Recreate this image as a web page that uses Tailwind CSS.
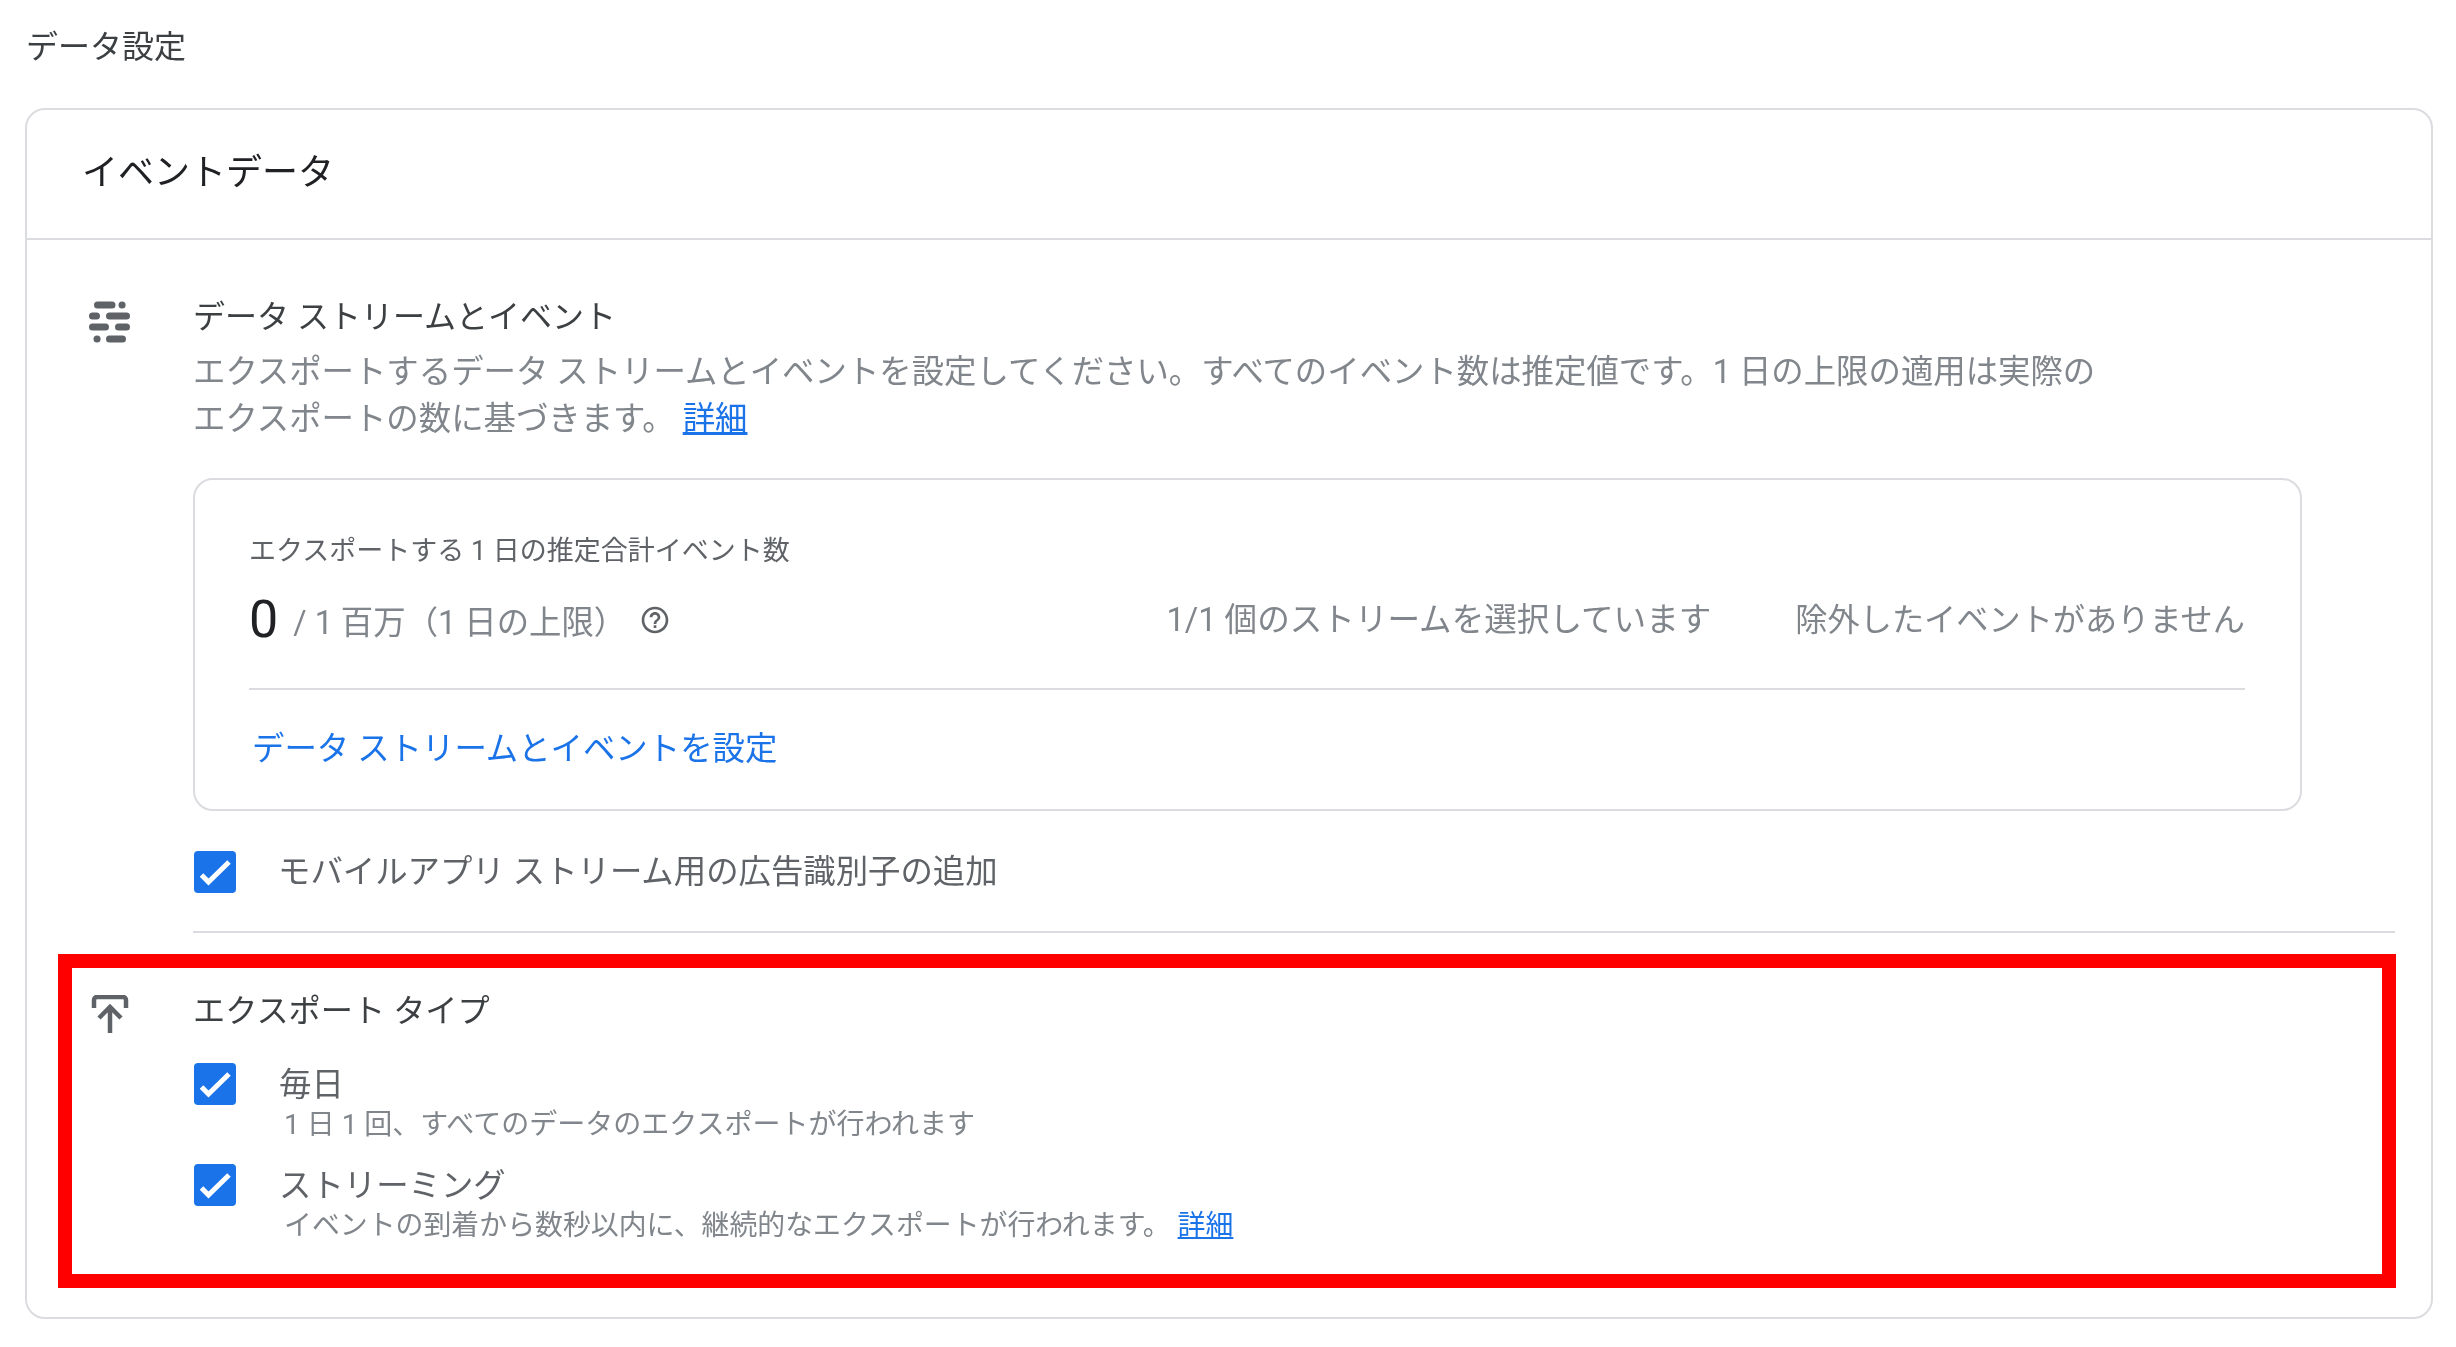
<!DOCTYPE html>
<html lang="ja">
<head>
    <meta charset="UTF-8">
    <title>データ設定</title>
    <script src="https://cdn.jsdelivr.net/npm/@tailwindcss/browser@4"></script>
</head>
<body class="bg-white font-['Roboto','Noto_Sans_CJK_JP',sans-serif] text-[#3c4043]">
    <div class="w-[2456px] h-[1347px] overflow-hidden blur-[0.6px]">
        <h1 class="ml-[26px] pt-[24px] h-[70px] text-[32px] leading-[46px] font-normal">データ設定</h1>

        <div class="mt-[38px] ml-[25px] w-[2408px] h-[1211px] border-2 border-[#dadce0] rounded-[20px]">
            <!-- header -->
            <div class="h-[130px] border-b-2 border-[#dadce0] pl-[55px] pb-[2px] flex items-center">
                <h2 class="text-[36px] font-normal text-[#202124]">イベントデータ</h2>
            </div>

            <!-- data streams -->
            <div class="flex items-start pl-[58px] pt-[54px]">
                <svg class="mt-[6px] w-[50px] h-[50px] shrink-0" viewBox="0 0 50 50" fill="none" stroke="#5f6368" stroke-width="7" stroke-linecap="round">
                    <path d="M12.5 5h14.5M37 5h.1M7.500 16h4M24.500 16h17M7.500 27h13M33.500 27h8M12 39h.1M24.500 39h13"/>
                </svg>
                <div class="ml-[58px] flex-1 mr-[36px]">
                    <div class="text-[32px] leading-[47px]">データ ストリームとイベント</div>
                    <p class="mt-[8px] text-[32.4px] leading-[47px] text-[#80868b]">エクスポートするデータ ストリームとイベントを設定してください。すべてのイベント数は推定値です。1 日の上限の適用は実際の<br>エクスポートの数に基づきます。 <a href="#" class="text-[#1a73e8] underline">詳細</a></p>

                    <div class="mt-[35px] w-[2109px] h-[333px] border-2 border-[#dadce0] rounded-[20px] pl-[54px] pr-[55px] pt-[51px]">
                        <div class="text-[27px] leading-[40px] text-[#5f6368]">エクスポートする 1 日の推定合計イベント数</div>
                        <div class="mt-[19px] h-[60px] flex items-center justify-between">
                            <div class="flex items-center">
                                <span class="text-[52px] leading-[60px] text-[#202124]">0</span>
                                <span class="ml-[15px] mt-[7px] text-[32.4px] leading-[47px] text-[#80868b]">/ 1 百万（1 日の上限）</span>
                                <svg class="ml-[13px] w-[32px] h-[32px]" viewBox="0 0 24 24" fill="#5f6368">
                                    <path d="M11 18h2v-2h-2v2zm1-16C6.480 2 2 6.480 2 12s4.480 10 10 10 10-4.480 10-10S17.520 2 12 2zm0 18c-4.410 0-8-3.590-8-8s3.590-8 8-8 8 3.590 8 8-3.590 8-8 8zm0-14c-2.210 0-4 1.790-4 4h2c0-1.100.9-2 2-2s2 .9 2 2c0 2-3 1.750-3 5h2c0-2.250 3-2.500 3-5 0-2.210-1.790-4-4-4z"/>
                                </svg>
                            </div>
                            <div class="flex items-center gap-[84px] leading-[47px] text-[#80868b]">
                                <span class="text-[32.6px]">1/1 個のストリームを選択しています</span>
                                <span class="text-[32.2px]">除外したイベントがありません</span>
                            </div>
                        </div>
                        <div class="mt-[38px] h-[2px] bg-[#dadce0]"></div>
                        <a href="#" class="block mt-[37px] pl-[3px] text-[32.4px] leading-[44px] text-[#1a73e8]">データ ストリームとイベントを設定</a>
                    </div>

                    <div class="mt-[40px] pl-[1px] flex items-center gap-[42px] h-[42px]">
                        <svg class="w-[42px] h-[42px] shrink-0" viewBox="0 0 42 42">
                            <rect width="42" height="42" rx="4" fill="#1a73e8"/>
                            <path d="M7.500 24l7 7 20.500-20" fill="none" stroke="#fff" stroke-width="5"/>
                        </svg>
                        <span class="text-[32.4px] text-[#5f6368]">モバイルアプリ ストリーム用の広告識別子の追加</span>
                    </div>
                    <div class="mt-[38px] h-[2px] bg-[#dadce0]"></div>
                </div>
            </div>

            <!-- export type -->
            <div class="mt-[21px] ml-[31px] mr-[35px] h-[334px] border-[14px] border-[#ff0000] flex items-start pl-[16px] pt-[20px]">
                <svg class="mt-[7px] w-[44px] h-[44px] shrink-0" viewBox="0 0 44 44" fill="none" stroke="#5f6368" stroke-width="4.500">
                    <path d="M6 13V5a3 3 0 0 1 3-3h26a3 3 0 0 1 3 3v8M22 12v26M11 23l11-11 11 11"/>
                </svg>
                <div class="ml-[61px] flex-1">
                    <div class="text-[32.2px] leading-[47px]">エクスポート タイプ</div>
                    <div class="mt-[28px] pl-[1px] flex items-start gap-[43px]">
                        <svg class="w-[42px] h-[42px] shrink-0" viewBox="0 0 42 42">
                            <rect width="42" height="42" rx="4" fill="#1a73e8"/>
                            <path d="M7.500 24l7 7 20.500-20" fill="none" stroke="#fff" stroke-width="5"/>
                        </svg>
                        <div>
                            <div class="mt-[1px] text-[32.4px] leading-[42px] text-[#5f6368]">毎日</div>
                            <div class="ml-[5px] text-[28px] leading-[37px] text-[#80868b]">1 日 1 回、すべてのデータのエクスポートが行われます</div>
                        </div>
                    </div>
                    <div class="mt-[21px] pl-[1px] flex items-start gap-[43px]">
                        <svg class="w-[42px] h-[42px] shrink-0" viewBox="0 0 42 42">
                            <rect width="42" height="42" rx="4" fill="#1a73e8"/>
                            <path d="M7.500 24l7 7 20.500-20" fill="none" stroke="#fff" stroke-width="5"/>
                        </svg>
                        <div>
                            <div class="mt-[1px] text-[32.4px] leading-[42px] text-[#5f6368]">ストリーミング</div>
                            <div class="ml-[5px] text-[27.900px] leading-[37px] text-[#80868b]">イベントの到着から数秒以内に、継続的なエクスポートが行われます。 <a href="#" class="text-[#1a73e8] underline">詳細</a></div>
                        </div>
                    </div>
                </div>
            </div>
        </div>
    </div>
</body>
</html>
